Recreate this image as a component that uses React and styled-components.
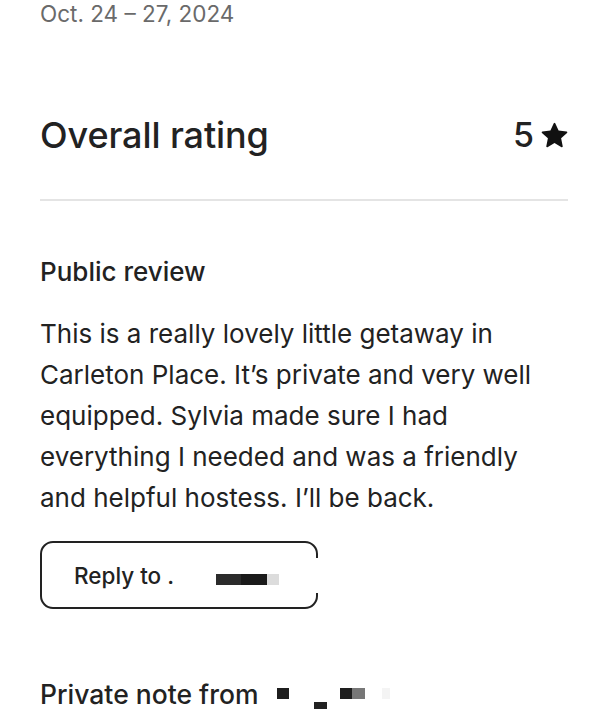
import React from "react";
import styled, { createGlobalStyle } from "styled-components";

const Global = createGlobalStyle`
  html, body { margin: 0; padding: 0; background: #fff; }
  body {
    font-family: Inter, "Noto Sans", "Liberation Sans", sans-serif;
    color: #222;
    -webkit-font-smoothing: antialiased;
  }
`;

const Page = styled.main`
  width: 609px;
  box-sizing: border-box;
  padding: 0 41px 0 40px;
  display: flex;
  flex-direction: column;
`;

const Dates = styled.div`
  font-size: 22.5px;
  line-height: 28px;
  color: #6a6a6a;
  margin-top: 0;
`;

const RatingRow = styled.div`
  display: flex;
  align-items: center;
  justify-content: space-between;
  margin-top: 87px;
  padding-bottom: 44px;
  border-bottom: 2px solid #e4e4e4;
`;

const Heading = styled.h2`
  margin: 0;
  font-size: 36px;
  line-height: 40px;
  font-weight: 500;
  letter-spacing: -0.1px;
`;

const Score = styled.div`
  display: flex;
  align-items: center;
  gap: 7px;
  font-size: 34px;
  font-weight: 500;
  line-height: 40px;
`;

const Section = styled.section`
  display: flex;
  flex-direction: column;
  margin-top: ${(p) => p.$top}px;
`;

const SubHeading = styled.h3`
  margin: 0;
  font-size: ${(p) => p.$size || 26}px;
  line-height: 30px;
  font-weight: 500;
  display: flex;
  align-items: center;
`;

const Body = styled.p`
  margin: 26px 0 0;
  font-size: 26px;
  line-height: 41px;
  font-weight: 400;
  letter-spacing: 0;
`;

const ReplyButton = styled.button`
  position: relative;
  align-self: flex-start;
  margin-top: 23px;
  width: 278px;
  height: 68px;
  box-sizing: border-box;
  border: 2.5px solid #222;
  border-radius: 13px;
  background: #fff;
  padding: 0 0 0 32px;
  display: flex;
  align-items: center;
  font-family: inherit;
  font-size: 22.5px;
  font-weight: 500;
  color: #222;
  cursor: pointer;

  &::after {
    content: "";
    position: absolute;
    right: -4px;
    top: 15px;
    bottom: 14px;
    width: 6px;
    background: #fff;
  }
`;

const Mask = styled.span`
  display: inline-block;
  width: ${(p) => p.$w}px;
  height: ${(p) => p.$h || 11}px;
  background: ${(p) => p.$c};
  margin-left: ${(p) => p.$ml || 0}px;
  position: relative;
  top: ${(p) => p.$dy || 0}px;
`;

const Star = () => (
  <svg width="27" height="26" viewBox="0 0 32 32" aria-hidden="true">
    <path
      fill="#111"
      d="M15.1 1.58l-4.13 8.88-9.86 1.27a1 1 0 0 0-.54 1.74l7.3 6.57-1.97 9.85a1 1 0 0 0 1.48 1.06l8.62-5 8.63 5a1 1 0 0 0 1.48-1.06l-1.97-9.85 7.3-6.57a1 1 0 0 0-.55-1.73l-9.86-1.28-4.12-8.88a1 1 0 0 0-1.82 0z"
    />
  </svg>
);

export default function App() {
  return (
    <>
      <Global />
      <Page>
        <Dates>Oct. 24 – 27, 2024</Dates>
        <RatingRow>
          <Heading>Overall rating</Heading>
          <Score>
            5
            <Star />
          </Score>
        </RatingRow>

        <Section $top={56}>
          <SubHeading>Public review</SubHeading>
          <Body>
            This is a really lovely little getaway in Carleton Place. It’s
            private and very well equipped. Sylvia made sure I had everything I
            needed and was a friendly and helpful hostess. I’ll be back.
          </Body>
          <ReplyButton>
            Reply to .
            <Mask $w={25} $c="#2b2b2b" $ml={42} $dy={4} />
            <Mask $w={26} $c="#1a1a1a" $dy={4} />
            <Mask $w={12} $c="#dcdcdc" $dy={4} />
          </ReplyButton>
        </Section>

        <Section $top={70}>
          <SubHeading $size={26.5}>
            Private note from
            <Mask $w={12} $c="#1e1e1e" $ml={19} $dy={-1} />
            <Mask $w={13} $c="#222" $ml={25} $dy={13} />
            <Mask $w={12} $c="#1e1e1e" $ml={13} $dy={-1} />
            <Mask $w={13} $c="#777" $dy={-1} />
            <Mask $w={8} $c="#f4f4f4" $ml={17} $dy={-1} />
          </SubHeading>
        </Section>
      </Page>
    </>
  );
}
